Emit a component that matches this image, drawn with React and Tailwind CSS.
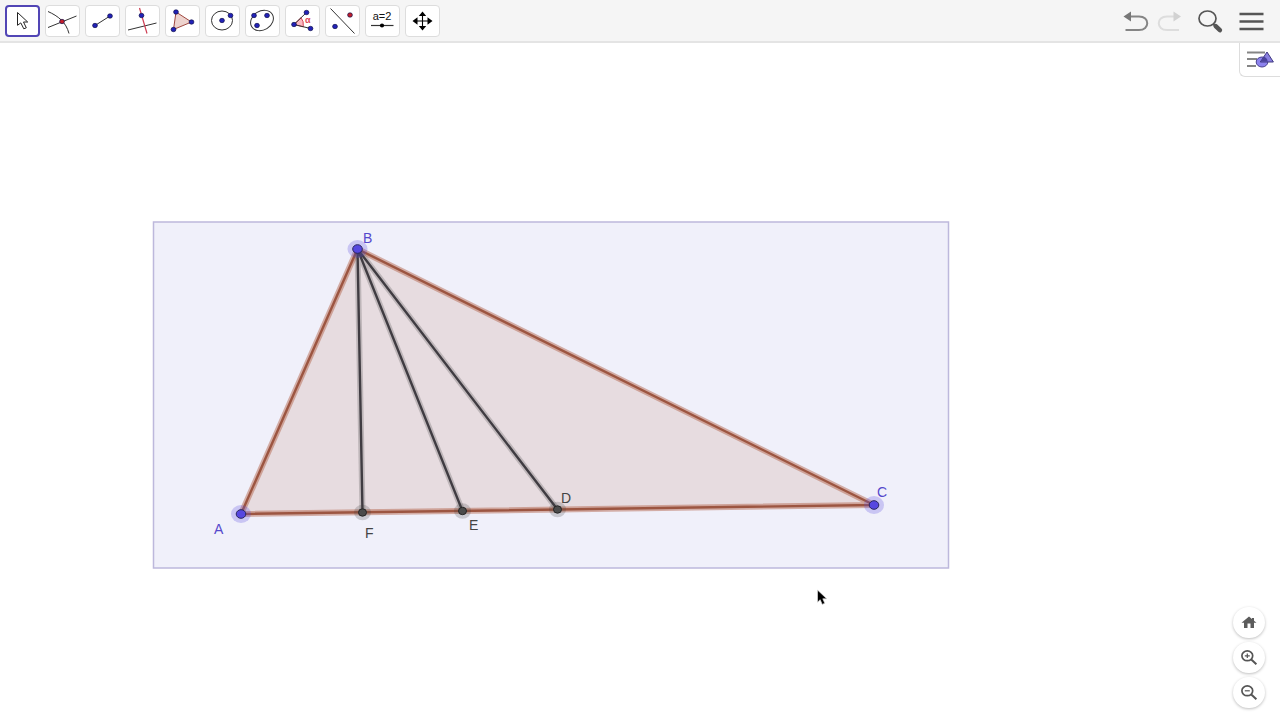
import React, { useState } from 'react';
import clsx from 'clsx';

const Dot = ({ x, y, fill = '#2222b8', r = 2.4 }) => (
  <ellipse cx={x} cy={y} rx={r} ry={r - 0.2} fill={fill} stroke="#10104a" strokeWidth="0.7" />
);

const Line = ({ d, stroke = '#333333', width = 1 }) => (
  <path d={d} fill="none" stroke={stroke} strokeWidth={width} />
);

// Every tool icon is drawn on a 35x32 board, the size of its button
const tools = [
  {
    name: 'Move',
    icon: <path d="M12.5 7.5V20.3l3.3-2.4 3 5.9 2.5-1-2.8-5.8h4.2z" fill="#ffffff" stroke="#222222" strokeWidth="1" />
  },
  {
    name: 'Intersect',
    icon: (
      <>
        <Line d="M3 6.5C13 11 21 17 24 28.5M3 22.5L31.5 11" />
        <Dot x={17} y={16.5} fill="#c41e2a" />
      </>
    )
  },
  {
    name: 'Segment',
    icon: (
      <>
        <Line d="M10 20.5L25 11" />
        <Dot x={10} y={20.5} />
        <Dot x={25} y={11} />
      </>
    )
  },
  {
    name: 'Perpendicular Line',
    icon: (
      <>
        <Line d="M3 25L31.5 18" />
        <Line d="M14.5 3L22 28.5" stroke="#cf4055" width={1.2} />
        <Dot x={16.5} y={10.5} />
      </>
    )
  },
  {
    name: 'Polygon',
    icon: (
      <>
        <path d="M11 7L26.5 17 8.5 24.5z" fill="#edd3ce" stroke="#a04840" strokeWidth="1" />
        <Dot x={11} y={7} />
        <Dot x={26.5} y={17} />
        <Dot x={8.5} y={24.5} />
      </>
    )
  },
  {
    name: 'Circle with Center',
    icon: (
      <>
        <ellipse cx="17" cy="15.5" rx="10.5" ry="9.5" fill="none" stroke="#333333" />
        <Dot x={17} y={15.5} />
        <Dot x={25.5} y={10.5} />
      </>
    )
  },
  {
    name: 'Ellipse',
    icon: (
      <>
        <ellipse cx="17" cy="15.5" rx="12" ry="9.5" fill="none" stroke="#333333" transform="rotate(-31 17 15.5)" />
        <Dot x={9} y={10.5} />
        <Dot x={22} y={10.5} />
        <Dot x={12} y={20.5} />
      </>
    )
  },
  {
    name: 'Angle',
    icon: (
      <>
        <path d="M9 19.5L16 12.7Q19 16 18.3 21.8z" fill="#fbb9c2" stroke="#cf3349" strokeWidth="0.9" />
        <Line d="M21.5 7.5L9 19.5 25.5 23.5" />
        <text x="20" y="18" fontSize="9" fontWeight="bold" fill="#dd4558">α</text>
        <Dot x={9} y={19.5} />
        <Dot x={21.5} y={7.5} />
        <Dot x={25.5} y={23.5} />
      </>
    )
  },
  {
    name: 'Reflect about Line',
    icon: (
      <>
        <Line d="M5.5 3.5L29.5 28.5" />
        <Dot x={10} y={21.5} />
        <Dot x={25} y={10} fill="#c41e2a" />
      </>
    )
  },
  {
    name: 'Slider',
    icon: (
      <>
        <text x="17" y="15" fontSize="11" textAnchor="middle" fill="#111111">a=2</text>
        <Line d="M6 20.5H28.5" width={1.2} />
        <circle cx="17" cy="20.5" r="2.1" fill="#000000" />
      </>
    )
  },
  {
    name: 'Move Graphics View',
    icon: (
      <>
        <path d="M17.5 9V23M11 16H24" stroke="#000000" strokeWidth="1.1" />
        <path d="M17.5 6.5l3.7 4.5h-7.4zM17.5 25.5l3.7-4.5h-7.4zM7.5 16l5-3.8v7.6zM27.5 16l-5-3.8v7.6z" fill="#000000" />
      </>
    )
  }
];

const ToolButton = ({ tool, selected, onSelect }) => (
  <button
    type="button"
    aria-label={tool.name}
    aria-pressed={selected}
    onClick={onSelect}
    className={clsx(
      'relative h-8 w-[35px] shrink-0 rounded bg-white',
      selected ? 'border-2 border-[#5145b5]' : 'border border-[#dddddd]'
    )}
  >
    <svg
      viewBox="0 0 35 32"
      className={clsx('absolute h-8 w-[35px] max-w-none', selected ? '-top-0.5 -left-0.5' : '-top-px -left-px')}
    >
      {tool.icon}
    </svg>
  </button>
);

const points = [
  { label: 'A', x: 241, y: 471, labelX: 214, labelY: 491, free: true },
  { label: 'B', x: 357.5, y: 206, labelX: 363, labelY: 200, free: true },
  { label: 'C', x: 874, y: 462, labelX: 877, labelY: 454, free: true },
  { label: 'D', x: 557.5, y: 466.5, labelX: 561, labelY: 460 },
  { label: 'E', x: 462.5, y: 468, labelX: 469, labelY: 487 },
  { label: 'F', x: 362.5, y: 469.5, labelX: 365, labelY: 495 }
];

const triangle = 'M241 471L357.5 206 874 462z';
const cevians = 'M362.5 469.5L357.5 206M462.5 468L357.5 206M557.5 466.5L357.5 206';

const GraphicsView = () => (
  <svg className="absolute inset-0 h-full w-full" role="img" aria-label="Triangle ABC with segments BD, BE and BF">
    <rect x="153.5" y="179" width="795" height="346" fill="#f0f0fa" stroke="#bdb8dc" strokeWidth="1.5" />
    <path d={triangle} fill="#993300" fillOpacity="0.1" />
    <path d={triangle} fill="none" stroke="#b05a40" strokeOpacity="0.45" strokeWidth="6" strokeLinejoin="round" />
    <path d={triangle} fill="none" stroke="#9c5541" strokeWidth="2.4" strokeLinejoin="round" />
    <path d={cevians} stroke="#404040" strokeOpacity="0.24" strokeWidth="6" />
    <path d={cevians} stroke="#403c42" strokeWidth="2.4" />
    {points.map(p => (
      <g key={p.label}>
        <ellipse
          cx={p.x}
          cy={p.y}
          rx={p.free ? 10 : 8.5}
          ry={p.free ? 9 : 7.8}
          fill={p.free ? '#5a48e0' : '#404040'}
          fillOpacity={p.free ? 0.26 : 0.22}
        />
        <ellipse
          cx={p.x}
          cy={p.y}
          rx={p.free ? 4.8 : 4}
          ry={p.free ? 4.3 : 3.7}
          fill={p.free ? '#5647e0' : '#4b4b4b'}
          stroke={p.free ? '#29265f' : '#252525'}
        />
        <text x={p.labelX} y={p.labelY} fontSize="14" fill={p.free ? '#5548cc' : '#444444'}>
          {p.label}
        </text>
      </g>
    ))}
    {/* pointer */}
    <path
      d="M817.5 547v12.2l2.7-2.5 2 4.7 2.6-1.1-2-4.5h4z"
      fill="#000000"
      stroke="#dddddd"
      strokeWidth="0.7"
    />
  </svg>
);

const RoundButton = ({ label, children }) => (
  <button
    type="button"
    aria-label={label}
    className="flex h-[31px] w-8 items-center justify-center rounded-full bg-white shadow-[0_1px_3px_rgba(0,0,0,0.26)]"
  >
    <svg viewBox="0 0 18 18" className="size-[18px]">
      {children}
    </svg>
  </button>
);

const Lens = ({ sign }) => (
  <g fill="none" stroke="#555555">
    <ellipse cx="7.3" cy="6.8" rx="5.4" ry="4.9" strokeWidth="1.7" />
    <path d="M11 10.2l5.4 5" strokeWidth="2" />
    <path d={sign} strokeWidth="1.2" />
  </g>
);

const App = () => {
  const [activeTool, setActiveTool] = useState('Move');

  return (
    <div className="flex min-h-screen flex-col bg-white font-['Liberation_Sans',Arial,sans-serif]">
      <header className="flex h-[43px] items-start justify-between border-b-2 border-[#e4e4e4] bg-[#f5f5f5] px-[5px]">
        <div className="flex gap-[5px] pt-[5px]">
          {tools.map(tool => (
            <ToolButton
              key={tool.name}
              tool={tool}
              selected={activeTool === tool.name}
              onSelect={() => setActiveTool(tool.name)}
            />
          ))}
        </div>

        <div className="flex h-[41px] items-center pr-2">
          <button type="button" aria-label="Undo" className="w-8">
            <svg viewBox="0 0 32 28" className="block h-7 w-8">
              <path d="M9 9.5H20C31 9.5 31 23 20 23H6.5" fill="none" stroke="#858585" strokeWidth="2" />
              <path d="M4.5 9.5l7.5-5v10z" fill="#777777" />
            </svg>
          </button>
          <button type="button" aria-label="Redo" className="w-8">
            <svg viewBox="0 0 32 28" className="block h-7 w-8">
              <path d="M25 9.5H16C5 9.5 5 23 16 23H28" fill="none" stroke="#dddddd" strokeWidth="2" />
              <path d="M30 9.5l-7.5-5v10z" fill="#d2d2d2" />
            </svg>
          </button>
          <button type="button" aria-label="Search" className="ml-2.5 w-8">
            <svg viewBox="0 0 32 28" className="block h-7 w-8">
              <ellipse cx="14.5" cy="11.5" rx="8.5" ry="7.5" fill="none" stroke="#555555" strokeWidth="1.7" />
              <path d="M20 17l3 2.5" stroke="#555555" strokeWidth="2" />
              <path d="M22.7 19.2l4.2 4" stroke="#555555" strokeWidth="4.5" strokeLinecap="round" />
            </svg>
          </button>
          <button type="button" aria-label="Menu" className="ml-2.5 w-8">
            <svg viewBox="0 0 32 28" className="block h-7 w-8">
              <path d="M4.5 7H28.5M4.5 14.5H28.5M4.5 22H28.5" stroke="#555555" strokeWidth="2.3" />
            </svg>
          </button>
        </div>
      </header>

      <main className="relative flex-1 overflow-hidden">
        <GraphicsView />
        <button
          type="button"
          aria-label="Style bar"
          className="absolute top-0 right-0 h-[34px] w-[41px] rounded-bl-md border-b border-l border-[#dddddd] bg-white"
        >
          <svg viewBox="0 0 40 33" className="block h-[33px] w-10">
            <path d="M7 9.5H25M7 16H17M7 23H16" stroke="#858585" strokeWidth="2" />
            <ellipse cx="22" cy="19" rx="5.8" ry="5" fill="#8c82ee" stroke="#49418f" />
            <path d="M27 9L33.4 19H20.3z" fill="#7468da" fillOpacity="0.85" stroke="#3f3880" />
            <path d="M20.8 18.5l3.4-5Q27 15 27.3 18.5z" fill="#4a429c" />
          </svg>
        </button>

        <div className="absolute right-[15px] bottom-3 flex flex-col gap-1">
          <RoundButton label="Standard view">
            <path d="M9 2.5L1.5 8.8H4V14h3.5v-4.5h3V14H14V8.8h2.5L14 6.7V4h-2v1z" fill="#5c5c5c" />
          </RoundButton>
          <RoundButton label="Zoom in">
            <Lens sign="M4.8 6.8h5M7.3 4.6v4.4" />
          </RoundButton>
          <RoundButton label="Zoom out">
            <Lens sign="M4.8 6.8h5" />
          </RoundButton>
        </div>
      </main>
    </div>
  );
};

export default App;
